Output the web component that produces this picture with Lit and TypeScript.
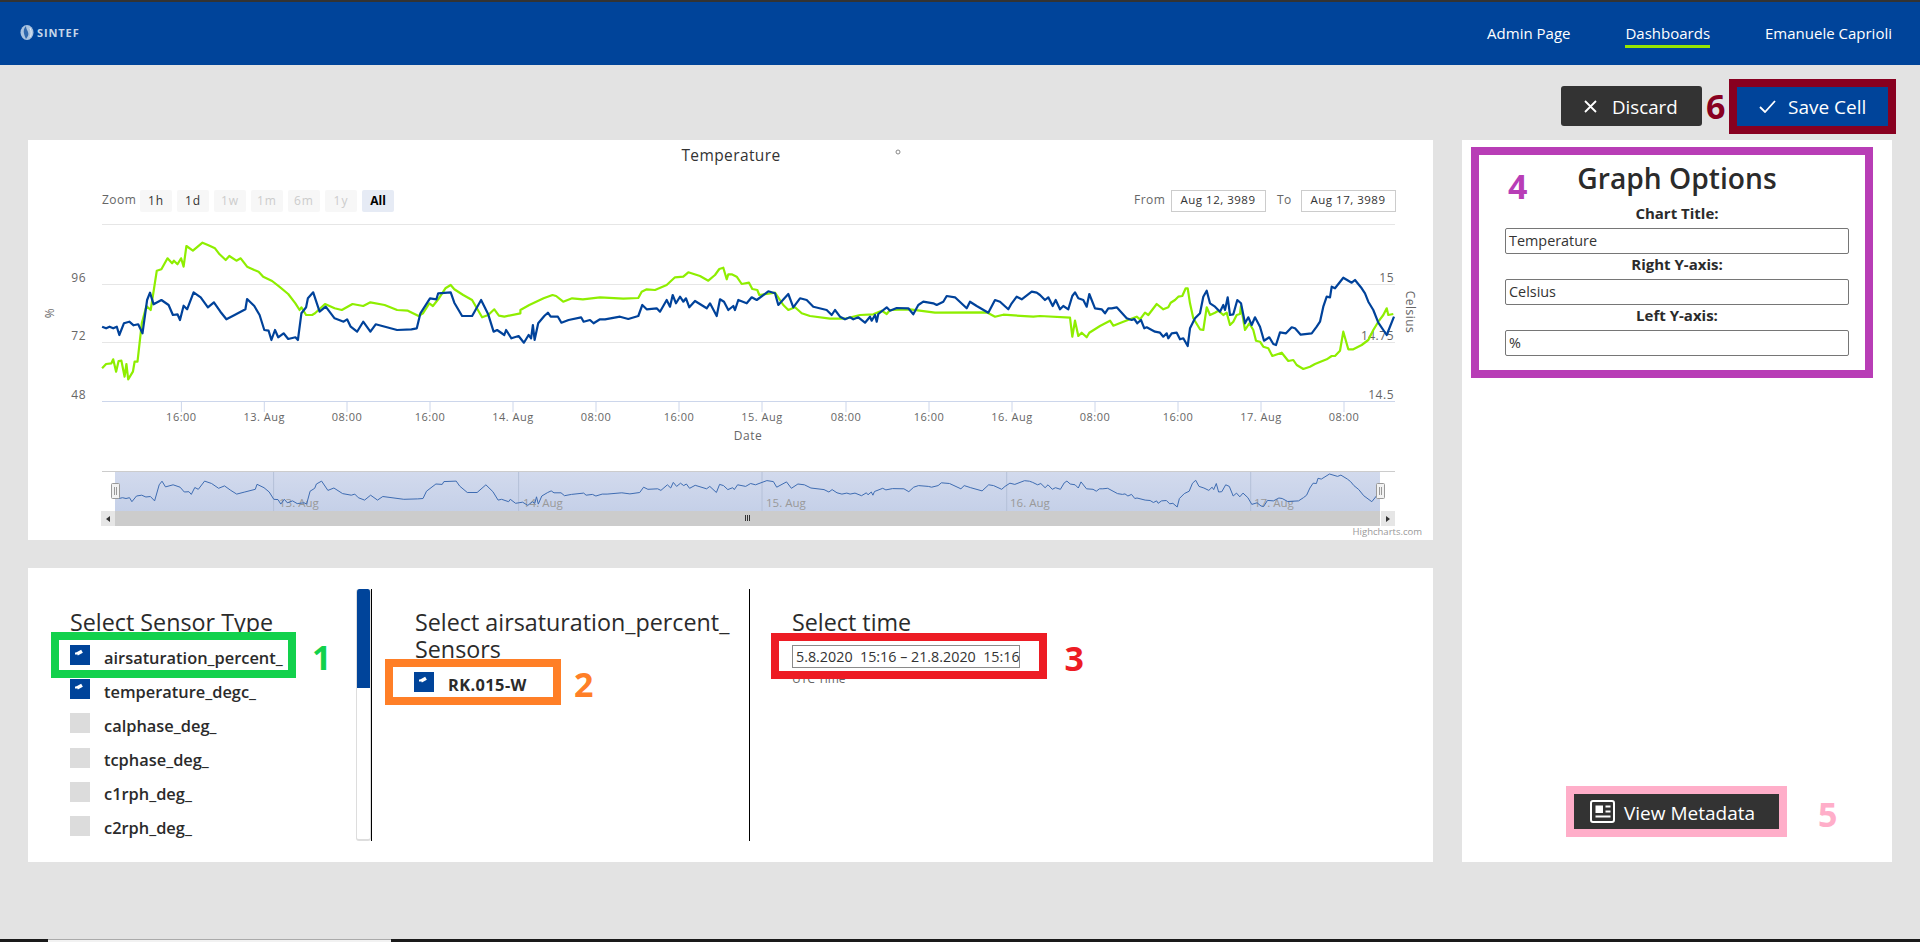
import { LitElement, html, css, svg } from "lit";
import { customElement } from "lit/decorators.js";

type Z = { ox: number; oy: number; sx: number; min: number; max: number; d: number[] };
const mk = (ox: number, sx: number, min: number, max: number, d: number[]): Z => ({ ox, oy: 220, sx, min, max, d });
const toPts = (segs: Z[]) => {
  const out: [number, number][] = [];
  for (const s of segs) {
    for (let i = 0; i < s.d.length; i += 2) {
      const x = s.ox + s.d[i] / s.sx;
      const y = s.oy + s.d[i + 1] / 3;
      if (x >= s.min && x < s.max) out.push([x, y]);
    }
  }
  return out;
};
const blue = toPts([
  mk(40, 2.8, 0, 600, [174,320,185,325,195,320,205,325,215,320,222,345,235,310,250,305,262,316,275,313,287,340,300,240,308,218,318,253,340,240,360,255,372,285,385,283,392,300,402,257,412,268,430,217,450,232,470,262,487,247,505,275,522,298,545,285,575,268,580,237,600,258,615,285,628,330,640,332,648,360,658,330,667,352,682,340,695,357,715,352,722,360,732,280,745,262,750,235,765,217,783,275,800,260,825,295,850,305,860,298,870,320,888,335,905,305,925,335,940,313,1000,330,1040,328,1055,325,1065,280,1092,235,1110,238,1115,220,1150,217,1160,248,1182,288,1210,288,1235,240,1255,283,1270,335,1280,330,1300,345,1305,330,1320,355,1340,348,1355,368,1368,345,1375,355,1380,315,1385,360,1395,310,1412,288,1422,278,1430,290,1450,290,1460,308,1480,300,1515,292,1522,305,1540,300,1550,310,1568,305]),
  mk(600, 3, 600, 1040, [0,298,15,298,60,290,85,297,115,288,127,255,140,268,170,265,180,275,200,240,210,260,218,225,228,250,240,230,250,245,258,235,268,262,285,243,320,265,330,250,350,288,360,238,372,245,385,270,400,258,405,270,415,240,440,250,455,232,470,240,505,214,525,220,535,255,565,222,580,262,600,235,620,240,640,260,680,270,695,285,705,270,720,290,735,298,750,292,760,298,775,292,795,308,810,290,815,302,825,285,830,305,835,282,860,262,870,272,890,264,925,265,940,283,955,255,970,245,1000,250,1010,255,1030,245,1040,228,1065,232,1100,265,1110,245,1130,258,1165,278,1185,240,1200,245,1225,268,1235,250,1250,230,1265,238,1295,215,1310,218]),
  mk(1040, 3, 1040, 9999, [0,225,15,240,25,232,38,258,47,240,60,268,70,258,85,268,97,228,105,217,115,235,130,240,140,260,148,222,165,265,185,268,195,280,205,265,215,265,230,262,260,295,275,300,283,297,292,310,303,300,313,325,320,322,345,335,360,338,370,350,380,340,385,355,395,340,410,338,420,358,430,355,443,378,450,325,465,295,480,280,490,230,500,212,510,250,525,260,540,275,550,255,555,270,563,232,570,285,580,283,592,240,603,250,615,310,625,292,635,315,645,292,660,320,672,362,688,352,700,372,708,375,720,337,738,340,755,322,765,325,782,344,815,340,830,320,840,305,850,260,860,230,870,232,875,200,885,205,910,173,935,188,945,180,965,205,975,220,985,245,1000,270,1015,308,1040,345,1062,290]),
]);
const green = toPts([
  mk(40, 2.8, 0, 600, [174,445,185,432,200,430,205,418,213,455,220,423,228,422,237,470,242,432,247,478,260,455,265,425,273,425,285,310,298,258,310,270,327,152,340,148,357,115,370,130,375,122,385,133,395,115,402,140,410,78,428,92,455,68,470,75,490,85,503,103,520,120,530,108,550,122,562,115,580,140,600,150,612,155,625,170,650,183,670,200,695,222,715,250,727,270,732,262,745,285,762,285,770,280,785,265,798,252,825,265,845,270,875,252,905,258,925,247,965,255,1000,270,1030,272,1060,288,1072,280,1090,250,1100,258,1115,238,1135,205,1150,195,1160,208,1185,225,1210,240,1238,292,1255,285,1272,268,1285,287,1300,290,1345,280,1345,270,1370,255,1410,235,1435,225,1445,228,1465,245,1490,235,1520,238,1568,233]),
  mk(600, 3, 600, 1040, [0,232,70,236,115,234,125,215,140,208,165,210,200,195,225,172,250,170,265,157,300,168,325,182,345,165,358,147,370,143,380,178,385,163,395,163,410,170,425,192,447,188,457,207,472,210,478,225,525,218,550,255,565,270,585,262,605,280,630,288,690,296,735,296,780,285,820,283,845,272,860,282,870,270,930,268,1005,278,1160,277,1185,290,1210,284,1300,290]),
  mk(1040, 3, 1040, 9999, [0,288,90,293,97,350,105,302,115,348,125,338,140,352,148,338,180,318,210,302,220,317,250,305,290,290,300,298,315,278,325,285,350,252,370,268,385,262,392,248,405,240,415,230,427,228,437,205,443,205,450,250,460,295,480,328,490,330,500,262,510,285,525,278,535,272,550,285,560,278,570,315,580,305,590,285,600,282,603,258,615,330,628,310,640,330,648,362,660,365,670,380,685,385,697,408,725,398,745,423,760,420,770,435,790,447,810,440,825,432,860,418,875,408,885,408,900,392,910,335,925,388,940,388,965,375,985,360,1000,330,1015,305,1030,285,1040,265,1045,285,1060,282]),
]);
const ptStr = (p: [number, number][]) => p.map(([x, y]) => `${x.toFixed(1)},${y.toFixed(1)}`).join(" ");
const navBlue = blue.map(([x, y]) => [((x - 102) * 1265) / 1293 + 115, 474 + (y - 277.7) * 0.483] as [number, number]);

const ticks: [number, string][] = [[181.4,"16:00"],[264.3,"13. Aug"],[347,"08:00"],[430,"16:00"],[513,"14. Aug"],[596,"08:00"],[679,"16:00"],[762,"15. Aug"],[846,"08:00"],[929,"16:00"],[1012,"16. Aug"],[1095,"08:00"],[1178,"16:00"],[1261,"17. Aug"],[1344,"08:00"]];
const zoomBtns: [number, string, string][] = [[140,"1h",""],[177,"1d",""],[214,"1w","off"],[251,"1m","off"],[288,"6m","off"],[325,"1y","off"],[362,"All","on"]];
const navLabels: [number, number, string][] = [[273.6,279,"13. Aug"],[518.6,523,"14. Aug"],[762,766,"15. Aug"],[1006.7,1010,"16. Aug"],[1250.7,1254,"17. Aug"]];

const chart = () => svg`
  <defs><linearGradient id="mask" x1="0" y1="0" x2="0" y2="1"><stop offset="0" stop-color="#d2daed"/><stop offset="1" stop-color="#c5d0e8"/></linearGradient></defs>
  <text class="title" x="731" y="161" text-anchor="middle">Temperature</text>
  <circle cx="898" cy="152" r="2" fill="none" stroke="#888"/>
  <text class="lbl big" x="102" y="204">Zoom</text>
  ${zoomBtns.map(([x, t, k]) => svg`
    <rect x=${x} y="190" width="32" height="22" rx="2" fill=${k === "on" ? "#e6ebf5" : "#f7f7f7"}/>
    <text class="zb ${k}" x=${x + 16} y="205" text-anchor="middle">${t}</text>`)}
  <text class="lbl big" x="1134" y="204">From</text>
  <rect x="1171.5" y="190.5" width="94" height="21" fill="#fff" stroke="#ccc"/>
  <text class="date" x="1218" y="204" text-anchor="middle">Aug 12, 3989</text>
  <text class="lbl big" x="1277" y="204">To</text>
  <rect x="1301.5" y="190.5" width="94" height="21" fill="#fff" stroke="#ccc"/>
  <text class="date" x="1348" y="204" text-anchor="middle">Aug 17, 3989</text>
  ${[224.5, 284.5, 342.5].map((y) => svg`<line x1="102" x2="1395" y1=${y} y2=${y} stroke="#e6e6e6" stroke-width="1"/>`)}
  <line x1="102" x2="1395" y1="401.5" y2="401.5" stroke="#ccd6eb"/>
  ${ticks.map(([x, t]) => svg`
    <line x1=${x} x2=${x} y1="402" y2="412" stroke="#ccd6eb"/>
    <text class="lbl" x=${x} y="421" text-anchor="middle">${t}</text>`)}
  <text class="lbl big" x="748" y="440" text-anchor="middle">Date</text>
  ${[["96",282],["72",340],["48",399]].map(([t, y]) => svg`<text class="lbl big" x="86" y=${y} text-anchor="end">${t}</text>`)}
  ${[["15",282],["14.75",340],["14.5",399]].map(([t, y]) => svg`<text class="lbl big" x="1394" y=${y} text-anchor="end">${t}</text>`)}
  <text class="lbl big" transform="translate(54 313) rotate(-90)" text-anchor="middle">%</text>
  <text class="lbl big" transform="translate(1406 312) rotate(90)" text-anchor="middle">Celsius</text>
  <polyline points=${ptStr(green)} fill="none" stroke="#8eee00" stroke-width="2.2" stroke-linejoin="round"/>
  <polyline points=${ptStr(blue)} fill="none" stroke="#00429a" stroke-width="2.2" stroke-linejoin="round"/>
  <rect x="115" y="472" width="1265" height="39" fill="url(#mask)"/>
  <line x1="102" x2="1395" y1="471.5" y2="471.5" stroke="#cccccc"/>
  ${navLabels.map(([lx, tx, t]) => svg`
    <line x1=${lx} x2=${lx} y1="472" y2="511" stroke="#b4c0d8"/>
    <text class="nl" x=${tx} y="507">${t}</text>`)}
  <polyline points=${ptStr(navBlue)} fill="none" stroke="#3e6cb2" stroke-width="1"/>
  <rect x="115" y="511" width="1265" height="15" fill="#cccccc"/>
  <rect x="101" y="511" width="14" height="15" fill="#e6e6e6"/>
  <rect x="1381" y="511" width="14" height="15" fill="#e6e6e6"/>
  <path d="M110 516v6l-4-3zM1386 516v6l4-3z" fill="#333"/>
  <path d="M745.5 515v6M747.5 515v6M749.5 515v6" stroke="#333" fill="none"/>
  ${[111.5, 1376.5].map((x) => svg`
    <rect x=${x} y="483.5" width="8" height="15" rx="1" fill="#f2f2f2" stroke="#999"/>
    <path d="M${x + 3} 487v8M${x + 5} 487v8" stroke="#999" fill="none"/>`)}
  <text class="credit" x="1422" y="535" text-anchor="end">Highcharts.com</text>
`;

const tick = html`<svg class="cb" viewBox="0 0 20 20"><rect width="20" height="20" fill="#00449a"/><path d="M7 9L12 6.200" stroke="#fff" stroke-width="3.500" fill="none"/><rect x="5" y="7.500" width="2" height="2" fill="#fff"/></svg>`;
const sensors = ["airsaturation_percent_", "temperature_degc_", "calphase_deg_", "tcphase_deg_", "c1rph_deg_", "c2rph_deg_"];

@customElement("app-root")
export class AppRoot extends LitElement {
  static styles = css`
    :host { display: flex; flex-direction: column; width: 1920px; height: 942px; background: #e3e3e3; overflow: hidden; font-family: "Open Sans", "Noto Sans", sans-serif; color: #2b2b2b; }
    header { height: 63px; border-top: 2px solid #333; background: #00449a; color: #fff; display: flex; align-items: center; justify-content: space-between; padding: 0 28px 0 20px; flex: none; }
    .logo { display: flex; align-items: center; gap: 3px; color: #c6d6e9; font-weight: 700; font-size: 11px; letter-spacing: .9px; margin-top: -2px; }
    nav { display: flex; gap: 55px; font-size: 15px; margin-top: 2px; }
    nav a { padding-bottom: 1px; border-bottom: 3px solid transparent; line-height: 22px; }
    nav a.active { border-bottom-color: #96e600; }
    .toolbar { height: 75px; flex: none; display: flex; justify-content: flex-end; align-items: flex-start; padding: 21px 32px 0 0; box-sizing: border-box; }
    button { font: inherit; color: #fff; border: 0; display: flex; align-items: center; }
    .discard { width: 141px; height: 40px; background: #333; border-radius: 3px; font-size: 18.700px; padding: 0 0 0 23px; gap: 15px; }
    .six { font-size: 34px; font-weight: 700; color: #880020; margin: 0 13px 0 4px; line-height: 40px; width: 18px; }
    .save { width: 151px; height: 39px; margin-top: 1px; background: #00449a; outline: 8px solid #880020; font-size: 19px; padding: 0 0 0 22px; gap: 12px; }
    .grid { display: grid; grid-template-columns: 1405px 430px; column-gap: 29px; padding-left: 28px; align-items: start; }
    .left { display: flex; flex-direction: column; gap: 28px; }
    .chart { width: 1405px; height: 400px; background: #fff; display: block; }
    .chart text { font-family: "Open Sans", sans-serif; }
    .chart .title { font-size: 15.500px; fill: #333; letter-spacing: .4px; }
    .chart .lbl { font-size: 11px; fill: #666; letter-spacing: .5px; }
    .chart .lbl.big { font-size: 12px; }
    .chart .zb { font-size: 12px; fill: #333; letter-spacing: 1px; }
    .chart .zb.off { fill: #ccc; }
    .chart .zb.on { fill: #000; font-weight: 700; letter-spacing: 0; }
    .chart .date { font-size: 11.500px; fill: #333; letter-spacing: .5px; }
    .chart .nl { font-size: 11.500px; fill: #999; }
    .chart .credit { font-size: 9.500px; fill: #999; }
    .sel { height: 294px; background: #fff; padding-top: 21px; box-sizing: border-box; display: grid; grid-template-columns: 328px 15px 1px 377px 1px 1fr; }
    .sel > div { height: 252px; }
    h3 { font-size: 23.300px; font-weight: 400; line-height: 27px; margin: 0; color: #2b2b2b; }
    .c1 { padding: 20px 0 0 42px; box-sizing: border-box; }
    .c2 { padding: 20px 0 0 43px; box-sizing: border-box; }
    .c3 { padding: 20px 0 0 42px; box-sizing: border-box; }
    .rows { display: flex; flex-direction: column; gap: 4.200px; margin: 4px 0 0 -11px; }
    .rowline { display: flex; align-items: center; gap: 24px; }
    .row { height: 30px; width: 229px; box-sizing: border-box; padding: 5px 0 5px 11px; display: flex; align-items: center; gap: 14px; font-weight: 600; font-size: 16.400px; color: #2b2b2b; white-space: nowrap; background: #fff; }
    .row span:last-child { position: relative; top: 2px; }
    .row.ann { position: relative; z-index: 1; }
    .green { outline: 8px solid #12d14c; }
    .orange { outline: 8px solid #ff7f27; width: 160px; padding-left: 21px; font-weight: 700; letter-spacing: .4px; }
    .cb { width: 20px; height: 20px; flex: none; display: block; }
    .empty { width: 20px; height: 20px; flex: none; background: #dcdcdc; }
    .num { font-weight: 700; font-size: 34px; line-height: 30px; position: relative; top: 2px; }
    .n1 { color: #12d14c; } .n2 { color: #ff7f27; } .n3 { color: #ed1c24; } .n5 { color: #ffaec9; }
    .thumbwrap { height: 252px; border: 1px solid #ddd; border-width: 0 1px 2px 1px; border-radius: 3px; box-sizing: border-box; background: #fff; overflow: hidden; }
    .thumb { height: 99px; background: #00449a; border-radius: 3px 3px 0 0; margin: 0 -1px; }
    .vline { background: #000; width: 1px; height: 252px; }
    .c2 .rowline { margin: 4px 0 0 -22px; gap: 21px; }
    .c3 .timeline { display: flex; align-items: center; gap: 26px; margin: 5px 0 0 -13.500px; }
    .timebox { width: 260px; height: 30px; background: #fff; outline: 8px solid #ed1c24; position: relative; z-index: 1; padding: 4px 0 0 13.500px; box-sizing: border-box; }
    .timeinput { width: 228px; height: 23px; border: 1px solid #8a8a8a; box-sizing: border-box; font-size: 14.300px; line-height: 21px; padding-left: 3px; white-space: pre; color: #333; overflow: hidden; }
    .utc { font-size: 12px; color: #666; line-height: 16px; }
    .panel { height: 722px; background: #fff; padding: 7px 0 33px 9px; box-sizing: border-box; display: flex; flex-direction: column; }
    .opts { width: 402px; height: 231px; border: 8px solid #b83db6; box-sizing: border-box; display: flex; flex-direction: column; align-items: center; padding-left: 10px; position: relative; }
    .opts h2 { font-size: 28.200px; font-weight: 600; margin: 3px 0 5px; line-height: 40px; color: #2b2b2b; }
    .opts label { font-size: 15px; font-weight: 700; line-height: 20px; height: 20px; margin-bottom: 5px; }
    .opts .input { width: 344px; height: 26px; flex: none; border: 1px solid #767676; border-radius: 2px; box-sizing: border-box; font-size: 14.400px; line-height: 24px; padding-left: 3px; color: #333; }
    .n4 { position: absolute; left: 29px; top: 15px; color: #b83db6; font-weight: 700; font-size: 34px; line-height: 32px; }
    .metaline { margin-top: auto; display: flex; align-items: center; gap: 39px; padding-left: 103px; }
    .meta { width: 205px; height: 35px; background: #333; outline: 8px solid #ffaec9; font-size: 19px; padding: 2px 0 0 16px; gap: 9px; }
    .meta svg { margin-top: -2px; }
    .bottom { margin-top: auto; height: 3px; display: flex; background: #1a1a1a; flex: none; }
    .bottom i { display: block; width: 343px; margin-left: 48px; background: #f2f2f2; border-top: 1px solid #aaa; box-sizing: border-box; }
  `;

  render() {
    return html`
      <header>
        <div class="logo">
          <svg width="14" height="15" viewBox="0 0 14 15"><ellipse cx="7" cy="7.500" rx="6.500" ry="7.500" fill="#a9c3e0"/><path d="M6 1C3 4 3 8 6 14C8 11 9 10 8 7C7.500 5 6 4 6 1Z" fill="#2f68ad"/><path d="M10 3c1.600 3 1.600 7 0 9" stroke="#e8eff7" fill="none"/></svg>
          <span>SINTEF</span>
        </div>
        <nav><a>Admin Page</a><a class="active">Dashboards</a><a>Emanuele Caprioli</a></nav>
      </header>
      <div class="toolbar">
        <button class="discard"><svg width="13" height="13" viewBox="0 0 13 13"><path d="M1 1l11 11M12 1L1 12" stroke="#fff" stroke-width="1.800" fill="none"/></svg>Discard</button>
        <span class="six">6</span>
        <button class="save"><svg width="17" height="13" viewBox="0 0 17 13"><path d="M1 7l5 5L16 1" stroke="#fff" stroke-width="1.800" fill="none"/></svg>Save Cell</button>
      </div>
      <div class="grid">
        <div class="left">
          <svg class="chart" viewBox="28 140 1405 400">${chart()}</svg>
          <div class="sel">
            <div class="c1">
              <h3>Select Sensor Type</h3>
              <div class="rows">
                ${sensors.map((s, i) => i === 0
                  ? html`<div class="rowline"><div class="row ann green">${tick}<span>${s}</span></div><span class="num n1">1</span></div>`
                  : html`<div class="rowline"><div class="row">${i === 1 ? tick : html`<span class="empty"></span>`}<span>${s}</span></div></div>`)}
              </div>
            </div>
            <div class="thumbwrap"><div class="thumb"></div></div>
            <div class="vline"></div>
            <div class="c2">
              <h3>Select airsaturation_percent_<br />Sensors</h3>
              <div class="rowline"><div class="row ann orange">${tick}<span>RK.015-W</span></div><span class="num n2">2</span></div>
            </div>
            <div class="vline"></div>
            <div class="c3">
              <h3>Select time</h3>
              <div class="timeline">
                <div class="timebox"><div class="timeinput">5.8.2020  15:16 – 21.8.2020  15:16</div></div>
                <span class="num n3">3</span>
              </div>
              <div class="utc">UTC Time</div>
            </div>
          </div>
        </div>
        <aside class="panel">
          <div class="opts">
            <span class="n4">4</span>
            <h2>Graph Options</h2>
            <label>Chart Title:</label><div class="input">Temperature</div>
            <label>Right Y-axis:</label><div class="input">Celsius</div>
            <label>Left Y-axis:</label><div class="input">%</div>
          </div>
          <div class="metaline">
            <button class="meta"><svg width="25" height="23" viewBox="0 0 25 23"><rect x="1" y="1" width="23" height="21" rx="2" fill="none" stroke="#fff" stroke-width="2"/><rect x="5.500" y="5.500" width="7.500" height="7.500" fill="#fff"/><path d="M15.500 6.500h5M15.500 11.500h5M5.500 16.500h15" stroke="#fff" stroke-width="2" fill="none"/></svg>View Metadata</button>
            <span class="num n5">5</span>
          </div>
        </aside>
      </div>
      <div class="bottom"><i></i></div>
    `;
  }
}
